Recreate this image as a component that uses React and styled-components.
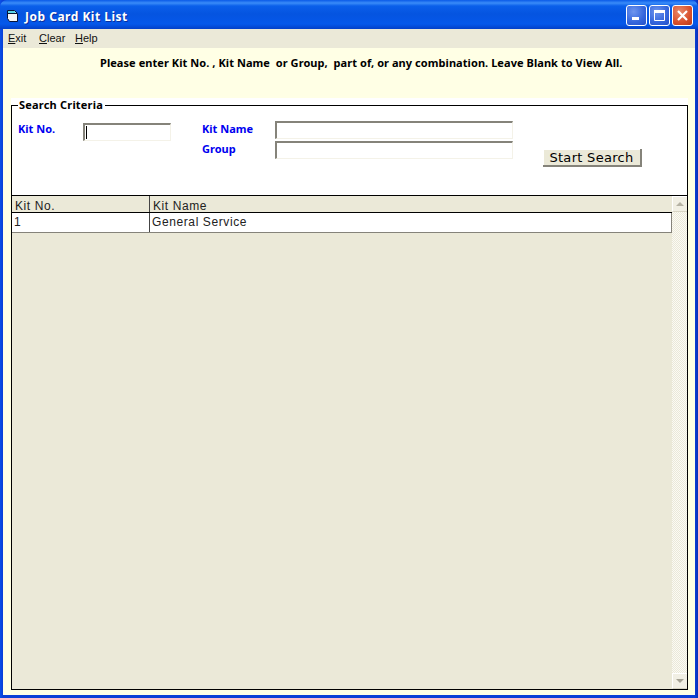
import React from "react";
import styled, { createGlobalStyle } from "styled-components";

const GlobalStyle = createGlobalStyle`
  html, body {
    margin: 0;
    padding: 0;
    background: #0831d9;
  }
`;

const Frame = styled.div`
  width: 698px;
  height: 698px;
  display: flex;
  flex-direction: column;
  overflow: hidden;
  background: linear-gradient(90deg, #0a50e8 0, #0a3fd6 3px, #0a3fd6 695px, #0a2fb8 698px);
`;

const TitleBar = styled.div`
  height: 29px;
  flex: none;
  box-sizing: border-box;
  display: flex;
  align-items: center;
  padding: 2px 5px 0 7px;
  border-radius: 7px 7px 0 0;
  background: linear-gradient(180deg, #0a5ae8 0, #3a8cf8 3px, #0a5fea 6px, #0554e0 14px, #0558ea 24px, #0340c8 29px);
`;

const AppIcon = styled.svg`
  width: 11px;
  height: 12px;
  flex: none;
`;

const Title = styled.span`
  margin: 1px 0 0 7px;
  color: #fff;
  font: bold 12px "Noto Sans", sans-serif;
  letter-spacing: 0.5px;
  text-shadow: 1px 1px 0 #0a2f9c;
`;

const Controls = styled.div`
  margin-left: auto;
  display: flex;
  gap: 2px;
`;

const ControlButton = styled.div`
  width: 21px;
  height: 21px;
  box-sizing: border-box;
  border: 1px solid #fff;
  border-radius: 3px;
  display: flex;
  align-items: center;
  justify-content: center;
  background: ${({ $close }) =>
    $close
      ? "radial-gradient(circle at 35% 30%, #e88a6c, #d9502c 60%, #b83a18)"
      : "radial-gradient(circle at 35% 30%, #6f96ee, #3465dc 60%, #2450c8)"};
`;

const Body = styled.div`
  flex: 1;
  margin: 0 3px 3px;
  display: flex;
  flex-direction: column;
  background: #ffffe5;
  min-height: 0;
`;

const MenuBar = styled.div`
  height: 19px;
  flex: none;
  display: grid;
  grid-template-columns: 31px 36px auto;
  justify-content: start;
  align-items: center;
  padding: 0 0 2px 5px;
  box-sizing: border-box;
  background: #ebe9d8;
  font: 11px "Liberation Sans", sans-serif;
  color: #111;

  u {
    text-decoration: underline;
  }
`;

const Notice = styled.div`
  height: 50px;
  flex: none;
  box-sizing: border-box;
  padding: 7px 0 0 97px;
  font: bold 11px "Noto Sans", sans-serif;
  letter-spacing: 0.06px;
  color: #000;
  white-space: pre;
`;

const Content = styled.div`
  flex: 1;
  display: flex;
  flex-direction: column;
  margin: 0 7px 5px 8px;
  min-height: 0;
`;

const SearchPanel = styled.div`
  height: 97px;
  flex: none;
  background: #fff;
`;

const SearchBox = styled.fieldset`
  height: 97px;
  box-sizing: border-box;
  margin: 0;
  padding: 0 0 0 6px;
  border: 1px solid #000;
  border-bottom: none;
  display: flex;
`;

const Legend = styled.legend`
  margin-left: 0;
  padding: 0 2px 0 1px;
  font: bold 11px "Noto Sans", sans-serif;
  letter-spacing: 0.2px;
  color: #000;
  line-height: 14px;
`;

const Fields = styled.div`
  display: flex;
  align-items: flex-start;
  padding-top: 9px;
`;

const FieldColumn = styled.div`
  display: grid;
  grid-template-columns: ${({ $labelWidth }) => $labelWidth}px auto;
  row-gap: 2px;
  margin-left: ${({ $offset }) => $offset || 0}px;
  padding-top: ${({ $top }) => $top || 0}px;
`;

const FieldLabel = styled.label`
  font: bold 11px "Noto Sans", sans-serif;
  color: #0000f0;
  line-height: 16px;
  margin-top: ${({ $nudge }) => $nudge || 0}px;
`;

const Input = styled.div`
  width: ${({ $width }) => $width}px;
  height: 18px;
  box-sizing: border-box;
  background: #fff;
  border: 1px solid #f4f2e8;
  border-top: 2px solid #85837a;
  border-left: 2px solid #85837a;
  position: relative;
`;

const Caret = styled.span`
  position: absolute;
  left: 1px;
  top: 1px;
  width: 1px;
  height: 13px;
  background: #000;
`;

const SearchButton = styled.button`
  width: 99px;
  height: 18px;
  box-sizing: border-box;
  margin: 28px 0 0 30px;
  padding: 0;
  background: #ebe9d8;
  border: none;
  border-right: 2px solid #85837a;
  border-bottom: 2px solid #85837a;
  box-shadow: inset 1px 1px 0 #fff;
  font: 13px "DejaVu Sans", sans-serif;
  letter-spacing: 0.3px;
  color: #000;
`;

const GridBox = styled.div`
  flex: 1;
  display: flex;
  min-height: 0;
  border: 1px solid #000;
  background: #ebe9d8;
`;

const GridArea = styled.div`
  flex: 1;
  min-width: 0;
`;

const GridRow = styled.div`
  display: grid;
  grid-template-columns: 137px 1fr;
  grid-template-rows: minmax(0, 1fr);
  height: ${({ $height }) => $height}px;
  box-sizing: border-box;
  background: ${({ $header }) => ($header ? "#ebe9d8" : "#fff")};
  border-bottom: 1px solid ${({ $header }) => ($header ? "#000" : "#85837a")};
  border-right: ${({ $header }) => ($header ? "none" : "1px solid #85837a")};
`;

const GridCell = styled.div`
  padding-left: ${({ $header }) => ($header ? 3 : 2)}px;
  font: 12px/${({ $header }) => ($header ? 20 : 18)}px "Liberation Sans", sans-serif;
  letter-spacing: 0.6px;
  color: #222;
  white-space: nowrap;
  overflow: hidden;

  & + & {
    border-left: 1px solid ${({ $header }) => ($header ? "#000" : "#444")};
  }
`;

const ScrollBar = styled.div`
  width: 15px;
  flex: none;
  display: flex;
  flex-direction: column;
  justify-content: space-between;
  background-color: #f4f2ea;
  background-image: repeating-conic-gradient(#fbfaf5 0 25%, #ebe9d8 0 50%);
  background-size: 2px 2px;
`;

const ScrollButton = styled.div`
  height: 16px;
  display: flex;
  align-items: center;
  justify-content: center;
  background: #f1efe4;
  border-left: 1px solid #fff;
  border-top: 1px solid #fff;
  box-sizing: border-box;
  border-bottom: 1px solid #d8d5c4;
`;

const Arrow = styled.span`
  width: 0;
  height: 0;
  border-left: 4px solid transparent;
  border-right: 4px solid transparent;
  ${({ $down }) =>
    $down ? "border-top: 4px solid #a5a294;" : "border-bottom: 4px solid #b5b2a4;"}
`;

const App = () => (
  <>
    <GlobalStyle />
    <Frame>
      <TitleBar>
        <AppIcon viewBox="0 0 11 12">
          <path d="M0.5 0.5h7l3 3v8h-8l-2-3z" fill="#f6f6f6" stroke="#071438" />
          <path d="M1 1h6.5l1.5 2H1z" fill="#58d4e8" />
          <path d="M1 3.5h9" stroke="#071438" />
        </AppIcon>
        <Title>Job Card Kit List</Title>
        <Controls>
          <ControlButton>
            <svg width="13" height="13" viewBox="0 0 13 13">
              <rect x="2" y="8" width="7" height="3" fill="#fff" />
            </svg>
          </ControlButton>
          <ControlButton>
            <svg width="13" height="13" viewBox="0 0 13 13">
              <path d="M1.5 1.5h10v10h-10z" fill="none" stroke="#fff" />
              <rect x="1" y="1" width="11" height="3" fill="#fff" />
            </svg>
          </ControlButton>
          <ControlButton $close>
            <svg width="13" height="13" viewBox="0 0 13 13">
              <path d="M2 2l9 9M11 2l-9 9" stroke="#fff" strokeWidth="2.2" />
            </svg>
          </ControlButton>
        </Controls>
      </TitleBar>
      <Body>
        <MenuBar>
          <span><u>E</u>xit</span>
          <span><u>C</u>lear</span>
          <span><u>H</u>elp</span>
        </MenuBar>
        <Notice>Please enter Kit No. , Kit Name  or Group,  part of, or any combination. Leave Blank to View All.</Notice>
        <Content>
          <SearchPanel>
            <SearchBox>
              <Legend>Search Criteria</Legend>
              <Fields>
                <FieldColumn $labelWidth={65} $top={2}>
                  <FieldLabel $nudge={-2}>Kit No.</FieldLabel>
                  <Input $width={88}><Caret /></Input>
                </FieldColumn>
                <FieldColumn $labelWidth={73} $offset={31}>
                  <FieldLabel>Kit Name</FieldLabel>
                  <Input $width={238} />
                  <FieldLabel>Group</FieldLabel>
                  <Input $width={238} />
                </FieldColumn>
                <SearchButton>Start Search</SearchButton>
              </Fields>
            </SearchBox>
          </SearchPanel>
          <GridBox>
            <GridArea>
              <GridRow $header $height={17}>
                <GridCell $header>Kit No.</GridCell>
                <GridCell $header>Kit Name</GridCell>
              </GridRow>
              <GridRow $height={20}>
                <GridCell>1</GridCell>
                <GridCell>General Service</GridCell>
              </GridRow>
            </GridArea>
            <ScrollBar>
              <ScrollButton><Arrow /></ScrollButton>
              <ScrollButton><Arrow $down /></ScrollButton>
            </ScrollBar>
          </GridBox>
        </Content>
      </Body>
    </Frame>
  </>
);

export default App;
